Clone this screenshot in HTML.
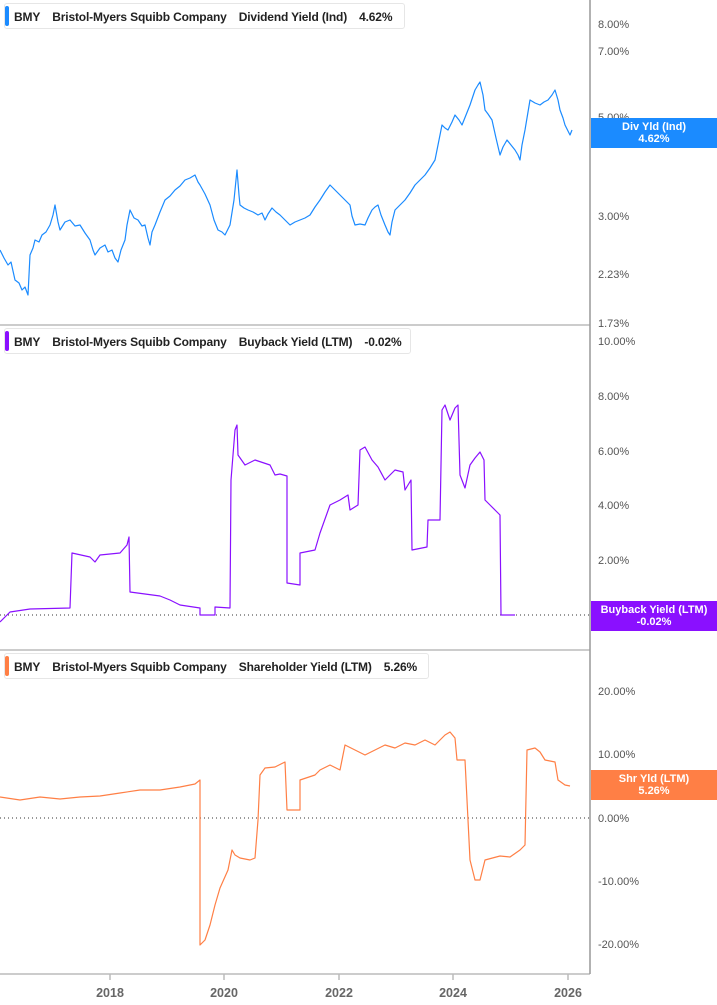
<!DOCTYPE html>
<html><head><meta charset="utf-8"><style>
body{margin:0;background:#fff;font-family:"Liberation Sans",sans-serif}
.leg{position:absolute;left:4px;height:26px;border:1px solid #e6e6e6;border-radius:3px;background:#fff;font-size:12px;font-weight:bold;color:#222;line-height:26px;padding-left:9px;box-sizing:border-box;white-space:nowrap;letter-spacing:-0.15px}
.leg i{position:absolute;left:0;top:2px;bottom:2px;width:4px;border-radius:2px}
.leg span{margin-right:12px}
.b{position:absolute;left:591px;width:126px;height:30px;color:#fff;font-size:11px;font-weight:bold;text-align:center;line-height:12px;padding-top:3px;box-sizing:border-box}
.t{font-size:11px;fill:#555}
</style></head><body>
<svg width="717" height="1005" style="position:absolute;left:0;top:0">
<g stroke="#bbb" stroke-width="1.5">
<line x1="0" y1="325" x2="590" y2="325"/><line x1="0" y1="650" x2="590" y2="650"/>
<line x1="0" y1="974" x2="590" y2="974"/><line x1="590" y1="0" x2="590" y2="974" stroke="#999"/>
<line x1="110" y1="974" x2="110" y2="980"/><line x1="224" y1="974" x2="224" y2="980"/><line x1="339" y1="974" x2="339" y2="980"/><line x1="453" y1="974" x2="453" y2="980"/><line x1="568" y1="974" x2="568" y2="980"/>
</g>
<g stroke="#333" stroke-dasharray="1,3"><line x1="0" y1="615" x2="590" y2="615"/><line x1="0" y1="818" x2="590" y2="818"/></g>
<g class="t">
<text x="598" y="28">8.00%</text><text x="598" y="55">7.00%</text><text x="598" y="121">5.00%</text><text x="598" y="220">3.00%</text><text x="598" y="278">2.23%</text><text x="598" y="327">1.73%</text>
<text x="598" y="345">10.00%</text><text x="598" y="400">8.00%</text><text x="598" y="455">6.00%</text><text x="598" y="509">4.00%</text><text x="598" y="564">2.00%</text>
<text x="598" y="695">20.00%</text><text x="598" y="758">10.00%</text><text x="598" y="822">0.00%</text><text x="598" y="885">-10.00%</text><text x="598" y="948">-20.00%</text>
</g>
<g font-size="12.5" font-weight="bold" fill="#666" text-anchor="middle">
<text x="110" y="997">2018</text><text x="224" y="997">2020</text><text x="339" y="997">2022</text><text x="453" y="997">2024</text><text x="568" y="997">2026</text>
</g>
<g fill="none" stroke-width="1.2" stroke-linejoin="round">
<polyline stroke="#1b8bff" points="0,250 4,258 8,265 11,262 15,280 19,283 22,290 25,287 28,295 30,255 33,248 35,240 39,242 42,235 46,232 50,225 53,215 55,205 58,222 60,230 65,222 70,220 75,226 80,225 85,233 90,240 93,250 95,255 100,248 105,245 108,252 112,250 115,258 118,262 121,250 125,240 127,225 130,210 134,218 138,220 142,226 145,225 148,238 150,245 152,232 155,225 160,212 165,200 170,196 175,190 180,186 185,180 190,178 195,175 198,182 200,185 205,194 210,205 214,220 218,230 222,232 225,235 228,229 230,225 234,200 237,170 239,195 240,205 244,208 248,210 253,212 258,215 262,213 265,220 268,214 272,208 276,212 280,215 285,220 290,225 295,222 300,220 305,218 310,215 315,207 320,200 325,192 330,185 335,190 340,195 345,200 350,205 352,216 355,225 360,224 365,225 368,218 372,210 375,207 378,205 381,215 385,225 388,232 390,235 392,222 395,210 400,205 405,200 410,193 415,185 420,180 425,175 430,168 435,160 438,145 442,125 445,128 448,130 452,122 455,115 459,120 462,125 466,115 470,105 473,96 475,90 478,85 480,82 483,95 485,110 488,114 492,120 496,138 500,155 503,147 507,140 511,145 515,150 518,155 520,160 522,145 525,130 528,112 530,100 535,103 540,105 544,102 548,100 552,95 555,90 558,100 560,110 563,118 565,125 568,131 570,135 572,130"/>
<polyline stroke="#8a10ff" points="0,622 10,612 30,609 70,608 72,553 90,557 95,562 100,555 120,553 127,545 129,537 130,592 145,594 160,596 170,600 180,605 200,608 200,615 215,615 215,607 230,608 231,480 235,430 237,425 238,455 245,465 255,460 270,465 275,475 280,474 287,476 287,583 300,585 300,553 315,550 320,533 330,505 340,500 348,495 350,510 358,505 360,450 365,447 372,460 378,467 385,480 395,470 403,472 405,490 411,480 412,550 427,547 428,520 440,520 442,410 445,405 450,420 455,408 458,405 460,475 465,488 470,465 475,458 480,452 484,460 485,500 490,505 497,512 500,515 501,615 515,615"/>
<polyline stroke="#ff7f45" points="0,797 20,800 40,797 60,799 80,797 100,796 120,793 140,790 160,790 180,787 195,784 200,780 200,945 205,940 210,925 215,905 220,888 228,870 232,850 235,855 240,858 250,860 255,858 258,820 260,775 265,768 275,767 285,762 287,810 300,810 300,780 315,775 320,770 330,765 340,770 345,745 355,750 365,755 375,750 385,745 395,748 405,743 415,745 425,740 435,745 445,735 450,732 455,738 457,760 465,760 470,860 475,880 480,880 485,860 500,856 510,857 520,850 525,845 527,750 535,748 540,752 545,760 555,762 558,780 565,785 570,786"/>
</g>
</svg>
<div class="leg" style="top:3px;width:401px"><i style="background:#1b8bff"></i><span>BMY</span><span>Bristol-Myers Squibb Company</span><span>Dividend Yield (Ind)</span><span>4.62%</span></div>
<div class="leg" style="top:328px;width:407px"><i style="background:#8a10ff"></i><span>BMY</span><span>Bristol-Myers Squibb Company</span><span>Buyback Yield (LTM)</span><span>-0.02%</span></div>
<div class="leg" style="top:653px;width:425px"><i style="background:#ff7f45"></i><span>BMY</span><span>Bristol-Myers Squibb Company</span><span>Shareholder Yield (LTM)</span><span>5.26%</span></div>
<div class="b" style="top:118px;background:#1b8bff">Div Yld (Ind)<br>4.62%</div>
<div class="b" style="top:601px;background:#8a10ff">Buyback Yield (LTM)<br>-0.02%</div>
<div class="b" style="top:770px;background:#ff7f45">Shr Yld (LTM)<br>5.26%</div>
</body></html>
